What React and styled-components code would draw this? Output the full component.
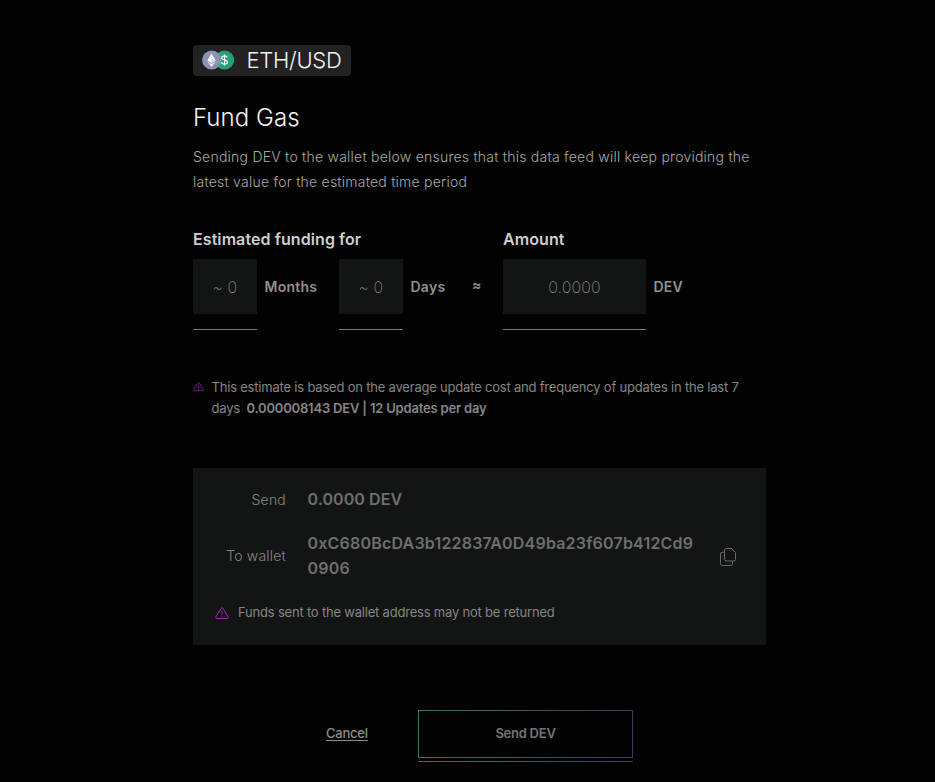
import React from "react";
import styled, { createGlobalStyle } from "styled-components";

const GlobalStyle = createGlobalStyle`
  * { box-sizing: border-box; }
  html, body { margin: 0; background: #020202; }
  body { font-family: Inter, "Liberation Sans", sans-serif; color: #f3f3f3; }
`;

const Page = styled.main`
  width: 573px;
  height: 782px;
  margin-left: 193px;
  padding-top: 45px;
`;

const FeedBadge = styled.div`
  display: flex;
  align-items: center;
  width: 158px;
  height: 31px;
  padding-left: 9px;
  gap: 12.5px;
  border-radius: 4px;
  background: #222;
  svg { margin-top: -1px; }
`;

const FeedName = styled.span`
  font-size: 22px;
  line-height: 31px;
  font-weight: 300;
  letter-spacing: -0.28px;
  white-space: nowrap;
`;

const Title = styled.h1`
  margin: 26px 0 0;
  font-size: 24px;
  line-height: 32px;
  font-weight: 300;
  letter-spacing: 0.05px;
`;

const Description = styled.p`
  margin: 10px 0 0;
  font-size: 14px;
  line-height: 25px;
  font-weight: 300;
  letter-spacing: 0.235px;
  color: #a9aaa9;
  white-space: nowrap;
`;

const FundingForm = styled.form`
  display: flex;
  margin-top: 35px;
`;

const FieldGroup = styled.section`
  width: ${(p) => p.$width}px;
`;

const GroupTitle = styled.h2`
  margin: 0;
  font-size: 16px;
  line-height: 20px;
  font-weight: 600;
  letter-spacing: 0.08px;
  color: #cfcfcf;
  white-space: nowrap;
`;

const Fields = styled.div`
  display: flex;
  margin-top: 10px;
`;

const Field = styled.label`
  display: flex;
  width: ${(p) => p.$width}px;
  gap: 7.5px;
`;

const InputFrame = styled.span`
  flex: none;
  width: ${(p) => p.$width}px;
  height: 71px;
  border-bottom: 1px solid #7b7c7b;
`;

const Input = styled.input`
  display: block;
  width: 100%;
  height: 55px;
  padding: 1px 0 0;
  border: 0;
  outline: 0;
  background: #131514;
  text-align: center;
  font: 200 16px Inter, sans-serif;
  letter-spacing: 0.1px;
  &::placeholder { color: #858585; opacity: 1; }
`;

const Unit = styled.span`
  font-size: 14px;
  line-height: 56px;
  font-weight: 600;
  letter-spacing: 0.25px;
  color: #8f908f;
`;

const Approximately = styled(Unit)`
  line-height: 51px;
`;

const Note = styled.div`
  display: flex;
  gap: ${(p) => p.$gap}px;
  margin-top: ${(p) => p.$top}px;
  font-size: 13px;
  line-height: 21px;
  letter-spacing: -0.2px;
  color: #858685;
  white-space: nowrap;
  svg { flex: none; margin-top: ${(p) => p.$iconTop}px; }
  p { margin: 0; }
  strong { font-weight: 600; margin-left: 3px; letter-spacing: -0.185px; }
`;

const Summary = styled.section`
  height: 177px;
  margin-top: 49px;
  padding: 19px 22px 0;
  background: #131514;
`;

const SummaryRow = styled.div`
  display: grid;
  grid-template-columns: 71px 388px 1fr;
  column-gap: 22px;
  align-items: center;
  & + & { margin-top: 19px; }
`;

const SummaryLabel = styled.span`
  padding-top: 1px;
  margin-bottom: ${(p) => p.$raise || 0}px;
  font-size: 14px;
  line-height: 24px;
  font-weight: 300;
  letter-spacing: 0.2px;
  text-align: right;
  color: #858685;
  white-space: nowrap;
`;

const SummaryValue = styled.span`
  margin-left: -0.5px;
  font-size: 16px;
  line-height: 25px;
  font-weight: 600;
  letter-spacing: ${(p) => p.$spacing}px;
  color: #6e6f6e;
  white-space: nowrap;
`;

const CopyButton = styled.button`
  justify-self: start;
  margin-left: 2px;
  width: 17px;
  height: 19px;
  padding: 0;
  border: 0;
  background: none;
  svg { display: block; }
`;

const Actions = styled.footer`
  display: flex;
  margin-top: 65px;
  padding-left: 133px;
  gap: 50px;
`;

const CancelLink = styled.a`
  width: 42px;
  height: 16px;
  margin-top: 15px;
  border-bottom: 1px solid #8c8d8c;
  font-size: 13px;
  line-height: 17px;
  font-weight: 500;
  letter-spacing: -0.25px;
  color: #8c8d8c;
`;

const SendFrame = styled.div`
  width: 215px;
  height: 52px;
  padding-bottom: 3px;
  border-bottom: 1px solid;
  border-image: linear-gradient(90deg, #39795f, #40365f) 1;
`;

const SendButton = styled.button`
  display: block;
  width: 215px;
  height: 48px;
  padding: 0 0 2px;
  border: 1px solid;
  border-image: linear-gradient(90deg, #39795f, #40365f) 1;
  background: #020202;
  font: 600 13px Inter, sans-serif;
  letter-spacing: -0.25px;
  color: #747574;
`;

function CoinPair() {
  return (
    <svg width="32" height="20" viewBox="0 0 32 20" aria-hidden="true">
      <circle cx="22.5" cy="10" r="9.6" fill="#25a174" />
      <path d="M22.5 4.5v11M25.3 7.7c-.3-1.2-1.4-1.8-2.8-1.8-1.6 0-2.8.7-2.8 2 0 2.7 5.7 1.3 5.7 4.1 0 1.3-1.2 2.1-2.9 2.1s-2.8-.7-3-2" fill="none" stroke="#fff" strokeWidth="1.1" />
      <circle cx="9.7" cy="10" r="9.6" fill="#8a92b5" />
      <path d="M9.5 3.5l4.2 7-4.2 2.5-4.2-2.5z" fill="#fff" />
      <path d="M5.3 11.5l4.2 2.4 4.2-2.4-4.2 5.6z" fill="#e9e9ef" />
      <path d="M9.5 8.6l4.2 1.9-4.2 2.5z" fill="#d4d6e2" />
    </svg>
  );
}

function WarningIcon({ width, height }) {
  return (
    <svg width={width} height={height} viewBox="0 0 14 12" fill="none" stroke="#a626b8" strokeLinecap="round" strokeLinejoin="round">
      <path d="M6.25 1.1q.75-1 1.5 0l5.5 9q.4 1.3-.9 1.4H1.65q-1.3-.1-.9-1.4z" />
      <path d="M7 4.2v3.5M7 9.4v.1" strokeWidth=".9" />
    </svg>
  );
}

function CopyIcon() {
  return (
    <svg width="17" height="19" viewBox="0 0 17 19" fill="none" stroke="#686968" strokeWidth="1">
      <path d="M6.3 1.5h5.2l4 4v7q0 1.5-1.5 1.5H6q-1.5 0-1.5-1.5V3.2q0-1.7 1.8-1.7z" />
      <path d="M4.5 5.3H2.2Q.5 5.3.5 7v9.8q0 1.7 1.7 1.7h8.6q1.7 0 1.7-1.7V14" />
    </svg>
  );
}

function QuantityField({ width, inputWidth, placeholder, unit }) {
  return (
    <Field $width={width}>
      <InputFrame $width={inputWidth}>
        <Input placeholder={placeholder} aria-label={unit} />
      </InputFrame>
      <Unit>{unit}</Unit>
    </Field>
  );
}

export default function App() {
  return (
    <>
      <GlobalStyle />
      <Page>
        <FeedBadge>
          <CoinPair />
          <FeedName>ETH/USD</FeedName>
        </FeedBadge>
        <Title>Fund Gas</Title>
        <Description>
          Sending DEV to the wallet below ensures that this data feed will keep providing the
          <br />
          latest value for the estimated time period
        </Description>
        <FundingForm>
          <FieldGroup $width={310}>
            <GroupTitle>Estimated funding for</GroupTitle>
            <Fields>
              <QuantityField width={146} inputWidth={64} placeholder="~ 0" unit="Months" />
              <QuantityField width={133} inputWidth={64} placeholder="~ 0" unit="Days" />
              <Approximately>≈</Approximately>
            </Fields>
          </FieldGroup>
          <FieldGroup $width={200}>
            <GroupTitle>Amount</GroupTitle>
            <Fields>
              <QuantityField width={200} inputWidth={143} placeholder="0.0000" unit="DEV" />
            </Fields>
          </FieldGroup>
        </FundingForm>
        <Note $gap={7.5} $top={47} $iconTop={5}>
          <WarningIcon width={11} height={9} />
          <p>
            This estimate is based on the average update cost and frequency of updates in the last 7
            <br />
            days <strong>0.000008143 DEV | 12 Updates per day</strong>
          </p>
        </Note>
        <Summary>
          <SummaryRow>
            <SummaryLabel>Send</SummaryLabel>
            <SummaryValue $spacing={0.08}>0.0000 DEV</SummaryValue>
          </SummaryRow>
          <SummaryRow>
            <SummaryLabel $raise={1}>To wallet</SummaryLabel>
            <SummaryValue $spacing={0.2}>
              0xC680BcDA3b122837A0D49ba23f607b412Cd9
              <br />
              0906
            </SummaryValue>
            <CopyButton aria-label="Copy wallet address">
              <CopyIcon />
            </CopyButton>
          </SummaryRow>
          <Note $gap={9} $top={21} $iconTop={5}>
            <WarningIcon width={14} height={12} />
            <p>Funds sent to the wallet address may not be returned</p>
          </Note>
        </Summary>
        <Actions>
          <CancelLink>Cancel</CancelLink>
          <SendFrame>
            <SendButton>Send DEV</SendButton>
          </SendFrame>
        </Actions>
      </Page>
    </>
  );
}
